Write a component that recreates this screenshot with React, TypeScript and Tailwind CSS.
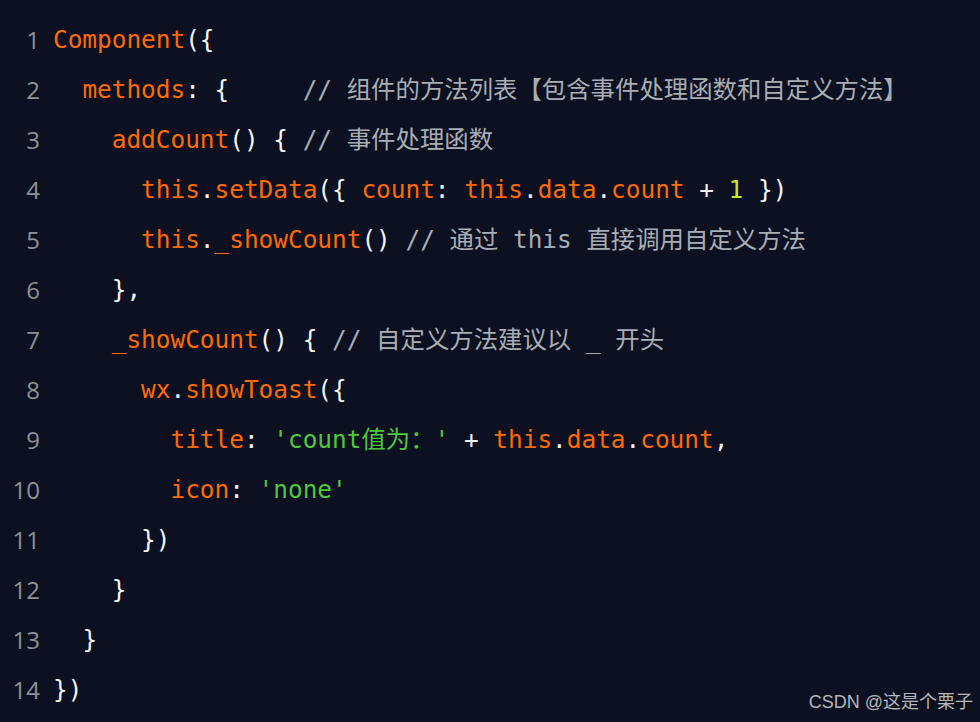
import React from "react";

type Tok = [string, string];

const O = "text-[#ff6a00]";
const W = "text-[#f2f4f8]";
const C = "text-[#a9adb5]";
const G = "text-[#4fc83a]";
const Y = "text-[#c8e62c]";

const lines: { indent: number; toks: Tok[] }[] = [
  { indent: 0, toks: [["Component", O], ["({", W]] },
  { indent: 2, toks: [["methods", O], [": {     ", W], ["// 组件的方法列表【包含事件处理函数和自定义方法】", C]] },
  { indent: 4, toks: [["addCount", O], ["() { ", W], ["// 事件处理函数", C]] },
  {
    indent: 6,
    toks: [
      ["this", O], [".", W], ["setData", O], ["({ ", W], ["count", O], [": ", W],
      ["this", O], [".", W], ["data", O], [".", W], ["count", O], [" + ", W], ["1", Y], [" })", W],
    ],
  },
  { indent: 6, toks: [["this", O], [".", W], ["_showCount", O], ["() ", W], ["// 通过 this 直接调用自定义方法", C]] },
  { indent: 4, toks: [["},", W]] },
  { indent: 4, toks: [["_showCount", O], ["() { ", W], ["// 自定义方法建议以 _ 开头", C]] },
  { indent: 6, toks: [["wx", O], [".", W], ["showToast", O], ["({", W]] },
  {
    indent: 8,
    toks: [
      ["title", O], [": ", W], ["'count值为：'", G], [" + ", W], ["this", O], [".", W],
      ["data", O], [".", W], ["count", O], [",", W],
    ],
  },
  { indent: 8, toks: [["icon", O], [": ", W], ["'none'", G]] },
  { indent: 6, toks: [["})", W]] },
  { indent: 4, toks: [["}", W]] },
  { indent: 2, toks: [["}", W]] },
  { indent: 0, toks: [["})", W]] },
];

export default function App() {
  return (
    <div className="relative w-[980px] h-[722px] bg-[#0c1020] overflow-hidden">
      <div className="flex flex-col pt-[15px]">
        {lines.map((l, i) => (
          <div key={i} className="flex h-[50px] items-center">
            <div
              className="w-[40px] text-right text-[24px] text-[#8e9196] shrink-0"
              style={{ fontFamily: '"Open Sans", "Noto Sans", sans-serif' }}
            >
              {i + 1}
            </div>
            <div
              className="pl-[13px] whitespace-pre text-[24.4px] leading-[50px]"
              style={{ fontFamily: '"DejaVu Sans Mono", "Noto Sans CJK SC", monospace' }}
            >
              {" ".repeat(l.indent)}
              {l.toks.map((t, j) => (
                <span key={j} className={t[1]}>
                  {t[0]}
                </span>
              ))}
            </div>
          </div>
        ))}
      </div>
      <div
        className="absolute right-[7px] bottom-[6px] text-[18px] text-[#b4b6bb]"
        style={{ fontFamily: '"Liberation Sans", "Noto Sans CJK SC", sans-serif' }}
      >
        CSDN @这是个栗子
      </div>
    </div>
  );
}
